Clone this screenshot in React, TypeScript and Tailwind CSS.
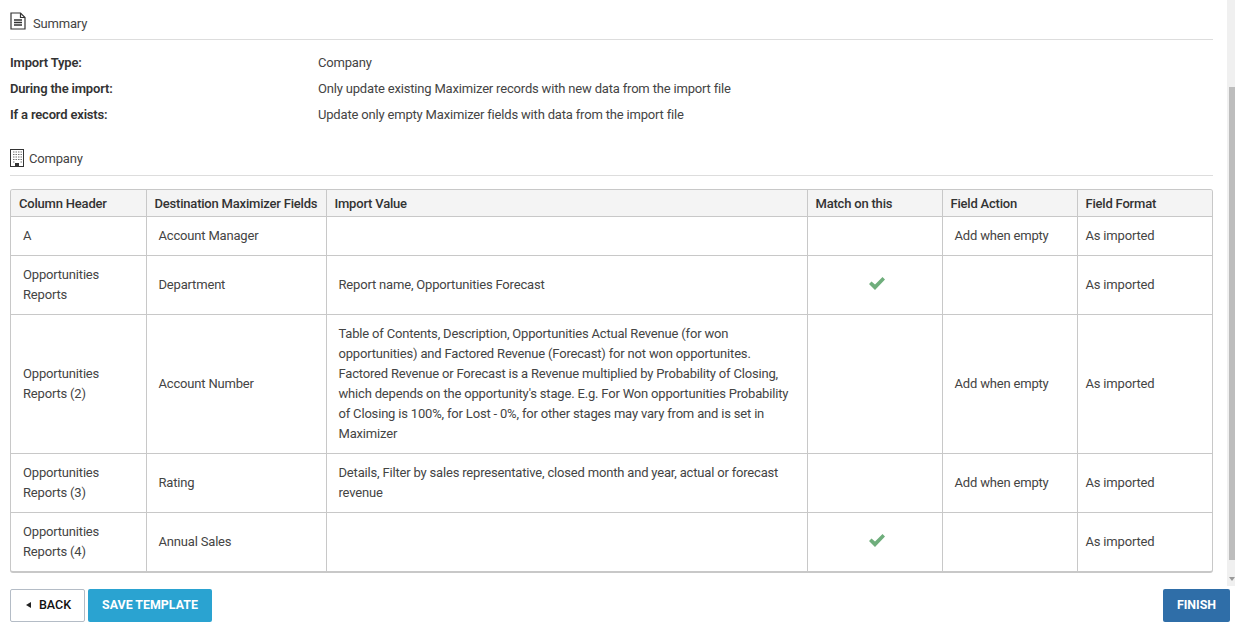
const font = { fontFamily: "Roboto, 'Liberation Sans', sans-serif" };

const rows = [
  { col: ["A"], field: "Account Manager", value: "", match: false, action: "Add when empty", h: "h-[39px]" },
  { col: ["Opportunities", "Reports"], field: "Department", value: "Report name, Opportunities Forecast", match: true, action: "", h: "h-[59px]" },
  {
    col: ["Opportunities", "Reports (2)"],
    field: "Account Number",
    value:
      "Table of Contents, Description, Opportunities Actual Revenue (for won opportunities) and Factored Revenue (Forecast) for not won opportunites. Factored Revenue or Forecast is a Revenue multiplied by Probability of Closing, which depends on the opportunity's stage. E.g. For Won opportunities Probability of Closing is 100%, for Lost - 0%, for other stages may vary from and is set in Maximizer",
    match: false,
    action: "Add when empty",
    h: "h-[139px]",
  },
  {
    col: ["Opportunities", "Reports (3)"],
    field: "Rating",
    value: "Details, Filter by sales representative, closed month and year, actual or forecast revenue",
    match: false,
    action: "Add when empty",
    h: "h-[59px]",
  },
  { col: ["Opportunities", "Reports (4)"], field: "Annual Sales", value: "", match: true, action: "", h: "h-[59px]" },
];

function DocIcon() {
  return (
    <svg width="16" height="18" viewBox="0 0 16 18" fill="none" stroke="#333" strokeWidth="1.2">
      <path d="M1 1h9.500L15 5.500V17H1z" />
      <path d="M10.500 1v4.500H15" />
      <path d="M4 8h8M4 10.500h8M4 13h8" strokeWidth="1.300" />
    </svg>
  );
}

function BuildingIcon() {
  return (
    <svg width="15" height="18" viewBox="0 0 15 18" fill="none">
      <rect x="0.500" y="0.500" width="13" height="17" stroke="#333" />
      <path
        d="M3 3h1.500M5.500 3H7M8 3h1.500M10.500 3H12M3 5.500h1.500M5.500 5.500H7M8 5.500h1.500M10.500 5.500H12M3 8h1.500M5.500 8H7M8 8h1.500M10.500 8H12M3 10.500h1.500M5.500 10.500H7M8 10.500h1.500M10.500 10.500H12M3 13h1.500M10.500 13H12"
        stroke="#777"
        strokeWidth="1.200"
      />
      <rect x="5" y="14" width="4" height="3.500" fill="#333" />
    </svg>
  );
}

function Check() {
  return (
    <svg width="16" height="13" viewBox="0 0 16 13" className="mx-auto mb-0.5">
      <path d="M0 7l2.500-2.500L6 7.500 13.500 0 16 2.500 6 13z" fill="#6fae7c" />
    </svg>
  );
}

const th = "border-r border-[#c8c8c8] px-2 pt-0.5 text-left font-medium tracking-[-0.2px] last:border-r-0";
const td = "border-r border-[#c8c8c8] last:border-r-0";

export default function App() {
  return (
    <div className="h-[628px] w-[1235px] overflow-hidden bg-white text-[13px] leading-5 tracking-[-0.18px] text-[#444]" style={font}>
      <div className="flex h-[586px]">
        <div className="w-[1227px] pl-2.5 pr-3.5">
          <div className="flex h-10 items-center gap-[7px] border-b border-[#ddd] pt-[3px]">
            <DocIcon />
            <span className="pt-1.5">Summary</span>
          </div>

          <div className="mt-2.5 grid grid-cols-[308px_1fr] auto-rows-[26px] items-center">
            <b className="font-semibold text-[#333]">Import Type:</b>
            <span>Company</span>
            <b className="font-semibold text-[#333]">During the import:</b>
            <span>Only update existing Maximizer records with new data from the import file</span>
            <b className="font-semibold text-[#333]">If a record exists:</b>
            <span>Update only empty Maximizer fields with data from the import file</span>
          </div>

          <div className="mt-[20px] flex h-[28px] items-center gap-1 border-b border-[#ddd] pb-2">
            <BuildingIcon />
            <span className="pt-0.5">Company</span>
          </div>

          <div className="mt-[13px] overflow-hidden rounded-[3px] border border-b-2 border-[#c8c8c8]">
            <table className="w-full table-fixed border-collapse">
              <colgroup>
                <col className="w-[135px]" />
                <col className="w-[180px]" />
                <col className="w-[481px]" />
                <col className="w-[135px]" />
                <col className="w-[135px]" />
                <col />
              </colgroup>
              <thead>
                <tr className="h-[26px] border-b border-[#c8c8c8] bg-[#f4f4f4] text-[#333]">
                  <th className={th}>Column Header</th>
                  <th className={th}>Destination Maximizer Fields</th>
                  <th className={th}>Import Value</th>
                  <th className={th}>Match on this</th>
                  <th className={th}>Field Action</th>
                  <th className={th}>Field Format</th>
                </tr>
              </thead>
              <tbody>
                {rows.map((r, i) => (
                  <tr key={i} className={`${r.h} border-b border-[#c8c8c8] last:border-b-0`}>
                    <td className={`${td} pl-3 pr-2`}>
                      {r.col.map((line) => (
                        <div key={line}>{line}</div>
                      ))}
                    </td>
                    <td className={`${td} px-3`}>{r.field}</td>
                    <td className={`${td} pl-3 pr-2`}>{r.value}</td>
                    <td className={`${td} pl-1`}>{r.match && <Check />}</td>
                    <td className={`${td} px-3`}>{r.action}</td>
                    <td className={`${td} px-2`}>As imported</td>
                  </tr>
                ))}
              </tbody>
            </table>
          </div>
        </div>

        <div className="relative w-2 bg-[#f0f0f0]">
          <div className="ml-0.5 mt-[87px] h-[473px] bg-[#bdbdbd]" />
          <div className="absolute bottom-[5px] left-0.5 h-0 w-0 border-x-[3px] border-t-[4px] border-x-transparent border-t-[#999]" />
        </div>
      </div>

      <div className="flex items-start pl-2.5 pr-[5px] pt-[3px] tracking-normal">
        <button className="flex h-[33px] w-[75px] items-center justify-center gap-2 rounded-[2px] border border-[#b4bcc6] bg-white pb-0.5 pl-0.5 text-[12.5px] font-medium text-[#111]">
          <span className="h-0 w-0 border-y-[3px] border-r-[5px] border-y-transparent border-r-[#222]" />
          BACK
        </button>
        <button className="ml-[3px] h-[33px] w-[124px] rounded-[2px] bg-[#2aa3d1] pb-0.5 text-[12.4px] font-bold text-white">SAVE TEMPLATE</button>
        <button className="ml-auto h-[33px] w-[67px] rounded-[2px] bg-[#2f6ea8] pb-0.5 text-[12.4px] font-bold text-white">FINISH</button>
      </div>
    </div>
  );
}
